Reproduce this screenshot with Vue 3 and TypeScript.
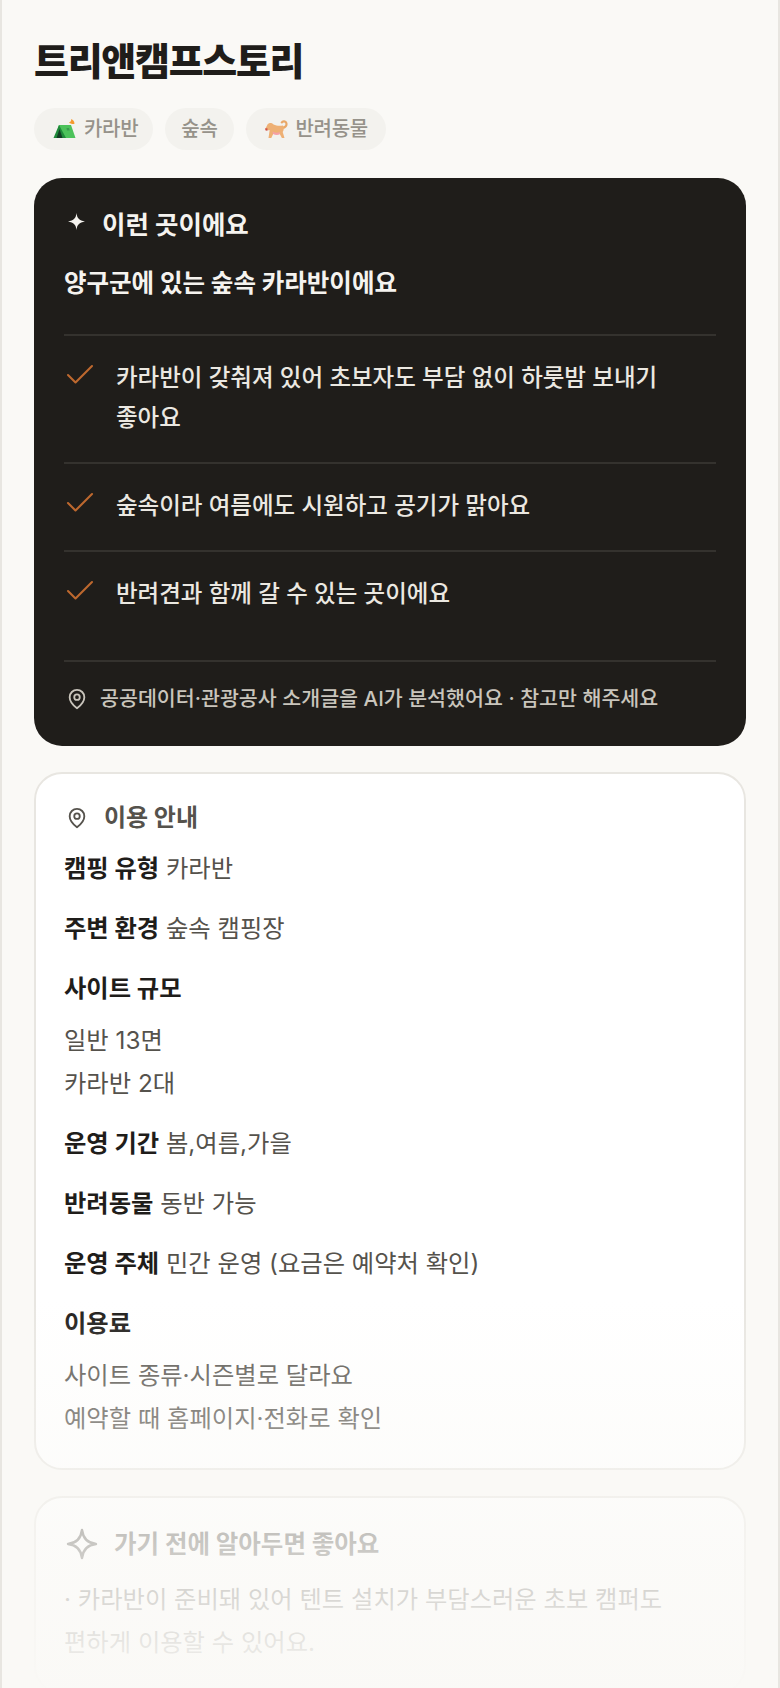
<script setup lang="ts">
const points = [
  '카라반이 갖춰져 있어 초보자도 부담 없이 하룻밤 보내기 좋아요',
  '숲속이라 여름에도 시원하고 공기가 맑아요',
  '반려견과 함께 갈 수 있는 곳이에요',
]
</script>

<template>
  <div class="page">
    <h1 class="title">트리앤캠프스토리</h1>
    <div class="chips">
      <span class="chip has-icon">
        <svg class="emoji" viewBox="0 0 24 24">
          <path d="M17 5.500c1.500-.5 2.500-2 2.200-3.500 1.800.6 3.300 2.400 3.300 4.800-1.800.5-4 0-5.500-1.300z" fill="#f59a2f" />
          <path d="M7 8h12l4.500 13H3z" fill="#4cc25a" />
          <path d="M7 8L1.500 21H14z" fill="#1f8a3a" />
          <path d="M7.500 12L4.500 21h6z" fill="#123f24" />
          <path d="M14.500 11h2.500l.7 2.500h-2.700z" fill="#3a9c4e" />
        </svg>
        <span class="chip-text">카라반</span>
      </span>
      <span class="chip"><span class="chip-text">숲속</span></span>
      <span class="chip has-icon">
        <svg class="emoji" viewBox="0 0 24 24">
          <path d="M18 11c3.500-.5 5-2.500 4.300-5-.6-2-3.600-2.300-4.500-.6" fill="none" stroke="#e9a868" stroke-width="2.200" stroke-linecap="round" />
          <path d="M3.500 7.500C5 5.500 8 5.500 9.500 7.500c3 1.500 6.500 1.500 9.500 1 1.200 2.500.8 5-.3 6.500l1.800 6h-2.600l-2.400-4.500c-2.200.6-4.500.6-6-.2L7.300 21H4.500l1.200-8c-1.800.5-3.300 0-4.400-1z" fill="#eeb074" />
          <path d="M8.500 14.500c2.300 1.500 5 1.600 7.500.6l-.5 2.500c-2 .7-4.500.5-6.500-.5z" fill="#f5a0a6" />
          <path d="M1 11.500l2.400-.3.100 2.500-1.900-.3z" fill="#cf4f46" />
        </svg>
        <span class="chip-text">반려동물</span>
      </span>
    </div>

    <section class="dark">
      <div class="dark-head">
        <svg class="spark" viewBox="0 0 24 24" fill="currentColor">
          <path d="M12 0c.8 7.500 3.700 10.600 12 12-8.300 1.400-11.200 4.500-12 12-.8-7.500-3.700-10.600-12-12 8.300-1.400 11.200-4.500 12-12z" />
        </svg>
        <span>이런 곳이에요</span>
      </div>
      <p class="lead">양구군에 있는 숲속 카라반이에요</p>
      <ul class="points">
        <li v-for="p in points" :key="p">
          <svg class="check" viewBox="0 0 24 24" fill="none" stroke="currentColor" stroke-width="1.400" stroke-linecap="round" stroke-linejoin="round">
            <path d="M20 6 9 17l-5-5" />
          </svg>
          <span>{{ p }}</span>
        </li>
      </ul>
      <div class="source">
        <svg class="pin" viewBox="0 0 24 24" fill="none" stroke="currentColor" stroke-width="2">
          <path d="M20 10c0 6-8 12-8 12s-8-6-8-12a8 8 0 0 1 16 0Z" />
          <circle cx="12" cy="10" r="3" />
        </svg>
        <span>공공데이터·관광공사 소개글을 AI가 분석했어요 · 참고만 해주세요</span>
      </div>
    </section>

    <section class="card">
      <div class="card-head">
        <svg class="pin" viewBox="0 0 24 24" fill="none" stroke="currentColor" stroke-width="2">
          <path d="M20 10c0 6-8 12-8 12s-8-6-8-12a8 8 0 0 1 16 0Z" />
          <circle cx="12" cy="10" r="3" />
        </svg>
        <span>이용 안내</span>
      </div>
      <div class="rows">
        <p><b>캠핑 유형</b> 카라반</p>
        <p><b>주변 환경</b> 숲속 캠핑장</p>
        <div>
          <b class="block">사이트 규모</b>
          <p>일반 13면</p>
          <p>카라반 2대</p>
        </div>
        <p><b>운영 기간</b> 봄,여름,가을</p>
        <p><b>반려동물</b> 동반 가능</p>
        <p><b>운영 주체</b> 민간 운영 (요금은 예약처 확인)</p>
        <div>
          <b class="block">이용료</b>
          <p>사이트 종류·시즌별로 달라요</p>
          <p>예약할 때 홈페이지·전화로 확인</p>
        </div>
      </div>
    </section>

    <section class="card tip">
      <div class="tip-head">
        <svg class="spark-line" viewBox="0 0 32 32" fill="none" stroke="currentColor" stroke-width="2.400" stroke-linejoin="round">
          <path d="M16 2c1 8 5 13 14 14-9 1-13 6-14 14-1-8-5-13-14-14 9-1 13-6 14-14z" />
        </svg>
        <span>가기 전에 알아두면 좋아요</span>
      </div>
      <p class="tip-text">· 카라반이 준비돼 있어 텐트 설치가 부담스러운 초보 캠퍼도 편하게 이용할 수 있어요.</p>
    </section>

    <div class="fade"></div>
  </div>
</template>

<style scoped>
.page {
  position: relative;
  box-sizing: border-box;
  width: 780px;
  height: 1688px;
  overflow: hidden;
  padding: 34px 32px 0;
  background: #faf9f6;
  border-left: 2px solid #e8e6e1;
  border-right: 2px solid #e8e6e1;
  font-family: Inter, "Noto Sans CJK KR", sans-serif;
  color: #1f1d1a;
  word-break: keep-all;
}
.title {
  margin: 0 0 20px;
  font-size: 38px;
  line-height: 54px;
  font-weight: 800;
  letter-spacing: -1.300px;
}
.chips {
  display: flex;
  gap: 12px;
}
.chip {
  display: flex;
  align-items: center;
  gap: 8px;
  height: 42px;
  padding: 0 16px;
  border-radius: 21px;
  background: #f3f2ee;
  color: #96928a;
  font-size: 20px;
  font-weight: 500;
  letter-spacing: -0.300px;
}
.chip-text {
  margin-top: -4px;
}
.has-icon {
  padding: 0 15px 0 18px;
}
.chip:last-child {
  padding-right: 18px;
}
.emoji {
  width: 24px;
  height: 24px;
  flex: none;
}
.dark {
  margin-top: 28px;
  padding: 30px 30px 31px;
  border-radius: 28px;
  background: #1f1d1a;
  color: #f5f3ef;
}
.dark-head {
  display: flex;
  align-items: center;
  gap: 17px;
  padding-left: 4px;
  font-size: 25.500px;
  font-weight: 700;
  line-height: 34px;
}
.spark {
  flex: none;
  width: 17px;
  height: 17px;
  margin-top: -7px;
}
.lead {
  margin: 23px 0 0;
  padding-bottom: 33px;
  border-bottom: 2px solid #34322e;
  font-size: 24.500px;
  line-height: 36px;
  font-weight: 700;
}
.points {
  list-style: none;
  margin: 0;
  padding: 0;
}
.points li {
  display: flex;
  gap: 18px;
  padding: 22px 44px 24px 0;
  color: #ebe8e1;
  font-size: 23.500px;
  font-weight: 500;
  line-height: 40px;
  border-bottom: 2px solid #34322e;
}
.points li:last-child {
  border-bottom: 0;
}
.check {
  flex: none;
  width: 36px;
  height: 36px;
  margin: -1px 0 0 -2px;
  color: #bd682e;
}
.source {
  display: flex;
  align-items: center;
  gap: 12px;
  margin-top: 22px;
  padding-top: 21px;
  border-top: 2px solid #34322e;
  font-size: 20.600px;
  font-weight: 500;
  line-height: 32px;
  color: #c9c5bc;
}
.pin {
  flex: none;
  width: 22px;
  height: 22px;
  margin-left: 2px;
}
.card {
  margin-top: 26px;
  padding: 27px 28px 28px;
  border: 2px solid #e8e6e1;
  border-radius: 28px;
  background: #fff;
}
.card-head {
  display: flex;
  align-items: center;
  gap: 16px;
  font-size: 24px;
  line-height: 34px;
  font-weight: 700;
  color: #55524c;
}
.rows {
  display: flex;
  flex-direction: column;
  gap: 17px;
  margin-top: 12px;
  font-size: 24.300px;
  line-height: 43px;
  color: #55524c;
}
.rows p {
  margin: 0;
}
.rows b {
  color: #1f1d1a;
  font-weight: 700;
}
.block {
  display: block;
  margin-bottom: 9px;
}
.tip {
  padding-top: 29px;
}
.tip-head {
  display: flex;
  align-items: center;
  gap: 16px;
  font-size: 24.500px;
  line-height: 34px;
  font-weight: 700;
  color: #55524c;
}
.spark-line {
  flex: none;
  width: 32px;
  height: 32px;
  margin-left: 2px;
}
.tip-text {
  margin: 17px 0 0;
  font-size: 24.300px;
  line-height: 43px;
  color: #55524c;
}
.fade {
  position: absolute;
  left: -2px;
  right: -2px;
  bottom: 0;
  height: 388px;
  background: linear-gradient(
    to bottom,
    rgba(250, 249, 246, 0),
    rgba(250, 249, 246, 0.7) 63%,
    rgba(250, 249, 246, 0.97)
  );
}
</style>
